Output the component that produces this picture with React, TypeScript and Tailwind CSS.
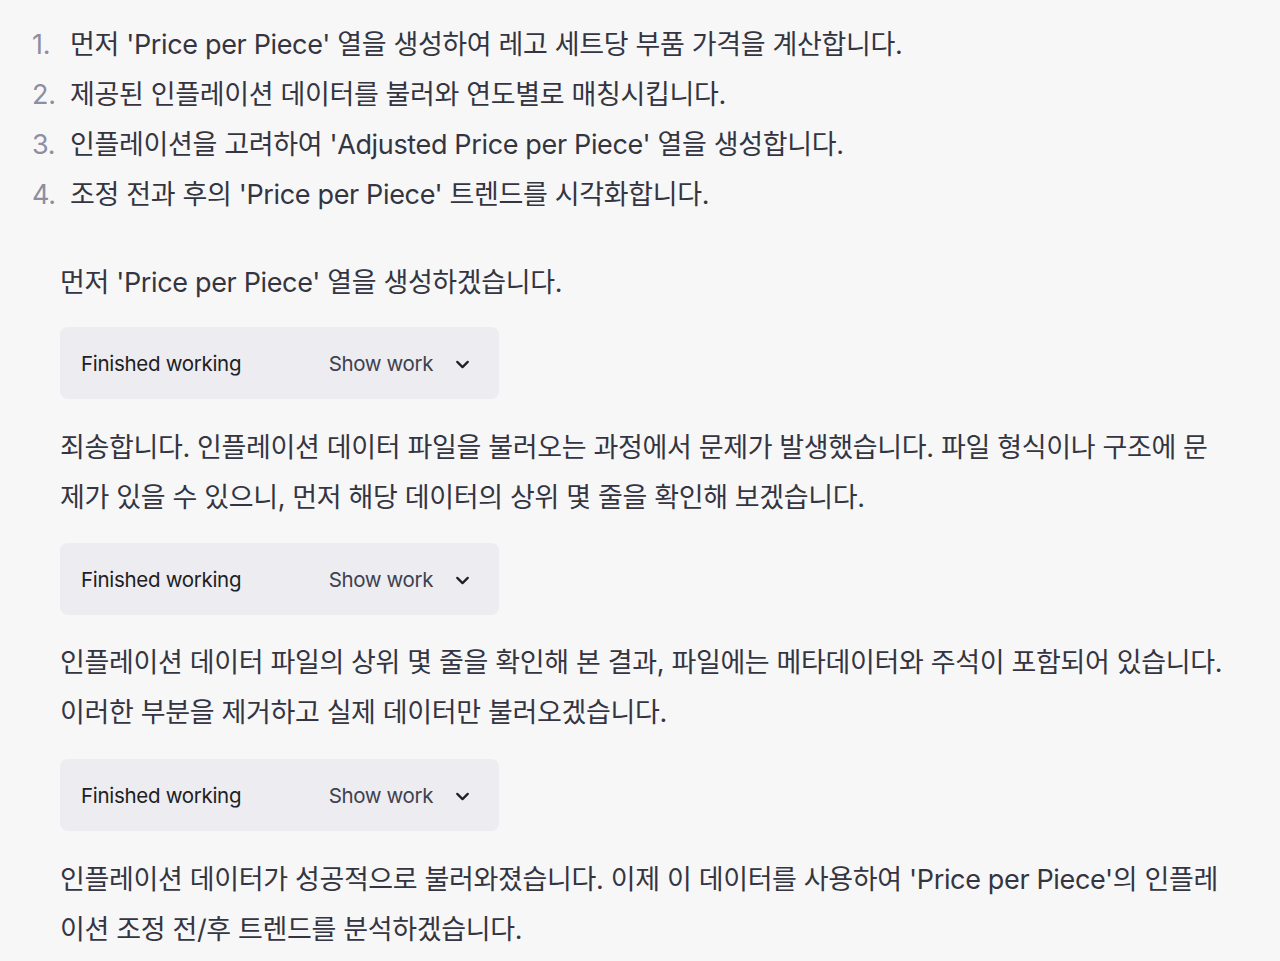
import { ChevronDown } from 'lucide-react';

const font = { fontFamily: 'Inter, "Noto Sans CJK KR", sans-serif' };

const steps = [
  "먼저 'Price per Piece' 열을 생성하여 레고 세트당 부품 가격을 계산합니다.",
  '제공된 인플레이션 데이터를 불러와 연도별로 매칭시킵니다.',
  "인플레이션을 고려하여 'Adjusted Price per Piece' 열을 생성합니다.",
  "조정 전과 후의 'Price per Piece' 트렌드를 시각화합니다.",
];

const WorkBox = () => (
  <div className="flex items-center justify-between w-[439px] h-[72px] rounded-lg bg-[#ececf1] pl-[21px] pr-[26px] pt-[2px]">
    <span className="text-[20.5px] tracking-[-0.3px] text-[#202123]">Finished working</span>
    <div className="flex items-center gap-[19px]">
      <span className="text-[20.5px] tracking-[-0.4px] text-[#40414f]">Show work</span>
      <ChevronDown className="w-[21px] h-[21px] text-[#202123]" strokeWidth={2.6} />
    </div>
  </div>
);

export default function App() {
  return (
    <div
      className="min-h-screen bg-[#f7f7f8] text-[#343541] text-[27px] leading-[50px] tracking-[-0.35px]"
      style={font}
    >
      <ol className="pt-[20px] pl-[32px]">
        {steps.map((s, i) => (
          <li key={i} className="flex">
            <span className="w-[38px] text-[#8e8ea0]">{i + 1}.</span>
            <span>{s}</span>
          </li>
        ))}
      </ol>

      <div className="pl-[60px] pt-[38px] flex flex-col">
        <p>먼저 'Price per Piece' 열을 생성하겠습니다.</p>
        <div className="mt-[19px] mb-[24px]">
          <WorkBox />
        </div>
        <p>
          죄송합니다. 인플레이션 데이터 파일을 불러오는 과정에서 문제가 발생했습니다. 파일 형식이나 구조에 문
          <br />
          제가 있을 수 있으니, 먼저 해당 데이터의 상위 몇 줄을 확인해 보겠습니다.
        </p>
        <div className="mt-[20px] mb-[23px]">
          <WorkBox />
        </div>
        <p>
          인플레이션 데이터 파일의 상위 몇 줄을 확인해 본 결과, 파일에는 메타데이터와 주석이 포함되어 있습니다.
          <br />
          이러한 부분을 제거하고 실제 데이터만 불러오겠습니다.
        </p>
        <div className="mt-[21px] mb-[24px]">
          <WorkBox />
        </div>
        <p>
          인플레이션 데이터가 성공적으로 불러와졌습니다. 이제 이 데이터를 사용하여 'Price per Piece'의 인플레
          <br />
          이션 조정 전/후 트렌드를 분석하겠습니다.
        </p>
      </div>
    </div>
  );
}
